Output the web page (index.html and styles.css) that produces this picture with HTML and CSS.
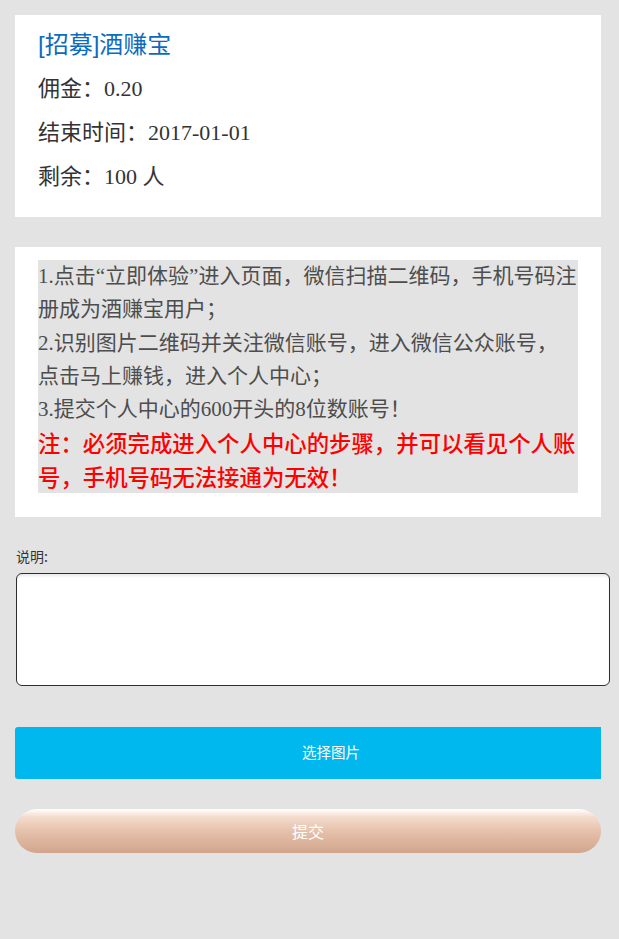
FILE: index.html
```html
<!DOCTYPE html>
<html lang="zh-CN">
<head>
<meta charset="utf-8">
<title>[招募]酒赚宝</title>
<link rel="stylesheet" href="styles.css">
</head>
<body>
<div class="card info">
  <h1 class="title">[招募]酒赚宝</h1>
  <p class="row">佣金：0.20</p>
  <p class="row">结束时间：2017-01-01</p>
  <p class="row">剩余：100 人</p>
</div>
<div class="card steps">
  <div class="desc">
    <p class="step">1.点击“立即体验”进入页面，微信扫描二维码，手机号码注册成为酒赚宝用户；<br>2.识别图片二维码并关注微信账号，进入微信公众账号，点击马上赚钱，进入个人中心；<br>3.提交个人中心的600开头的8位数账号！</p>
    <p class="warn">注：必须完成进入个人中心的步骤，并可以看见个人账号，手机号码无法接通为无效！</p>
  </div>
</div>
<form class="form">
  <label class="label" for="note">说明:</label>
  <textarea id="note" class="note"></textarea>
  <div class="upload-wrap">
    <div class="upload">选择图片</div>
  </div>
  <button type="button" class="submit">提交</button>
</form>
</body>
</html>
```
FILE: styles.css
```css
html, body {
  margin: 0;
  padding: 0;
}
body {
  background: #e3e3e3;
  padding-top: 15px;
  font-family: "Liberation Serif", "Noto Sans CJK SC", serif;
  color: #333;
}
.card {
  background: #fff;
  margin: 0 18px 0 15px;
}
.info {
  padding: 8px 23px 18px;
}
.title {
  margin: 0;
  font-family: "Liberation Sans", "Noto Sans CJK SC", sans-serif;
  font-weight: normal;
  font-size: 24px;
  line-height: 44px;
  color: #0d6bbd;
}
.row {
  margin: 0;
  font-size: 22px;
  line-height: 44px;
  color: #333;
}
.steps {
  margin-top: 30px;
  padding: 13px 23px 24px;
}
.desc {
  background: #e3e3e3;
}
.step {
  margin: 0;
  font-size: 21px;
  line-height: 33.3px;
  color: #4d4d4d;
}
.warn {
  margin: 0;
  color: #ff0000;
  font-family: "Noto Sans CJK SC", sans-serif;
  font-size: 22.4px;
  line-height: 33.3px;
  font-weight: 500;
}
.form {
  display: flex;
  flex-direction: column;
  margin: 29px 0 0 0;
  font-family: "Noto Sans CJK SC", sans-serif;
}
.label {
  margin-left: 16px;
  font-size: 14px;
  line-height: 20px;
  color: #333;
}
.note {
  box-sizing: border-box;
  margin: 7px 0 0 16px;
  width: 594px;
  height: 113px;
  border: 1px solid #2e2e2e;
  border-radius: 6px;
  background: #fff;
  box-shadow: inset 0 3px 3px -1px rgba(0, 0, 0, 0.09);
  resize: none;
  outline: none;
}
.upload-wrap {
  margin: 41px 18px 0 15px;
  height: 52px;
  overflow: hidden;
}
.upload {
  width: 632px;
  height: 52px;
  border-radius: 3px;
  background: #00b7ee;
  color: #fff;
  font-size: 14.5px;
  line-height: 50px;
  text-align: center;
}
.submit {
  margin: 30px 18px 0 15px;
  height: 44px;
  border: 0;
  border-radius: 22px;
  background: linear-gradient(to bottom, #ffffff 0%, #f4dccd 18%, #e6c1ab 50%, #d1a58c 100%);
  color: #fff;
  font-family: "Noto Sans CJK SC", sans-serif;
  font-size: 16px;
  padding: 0;
}
```
